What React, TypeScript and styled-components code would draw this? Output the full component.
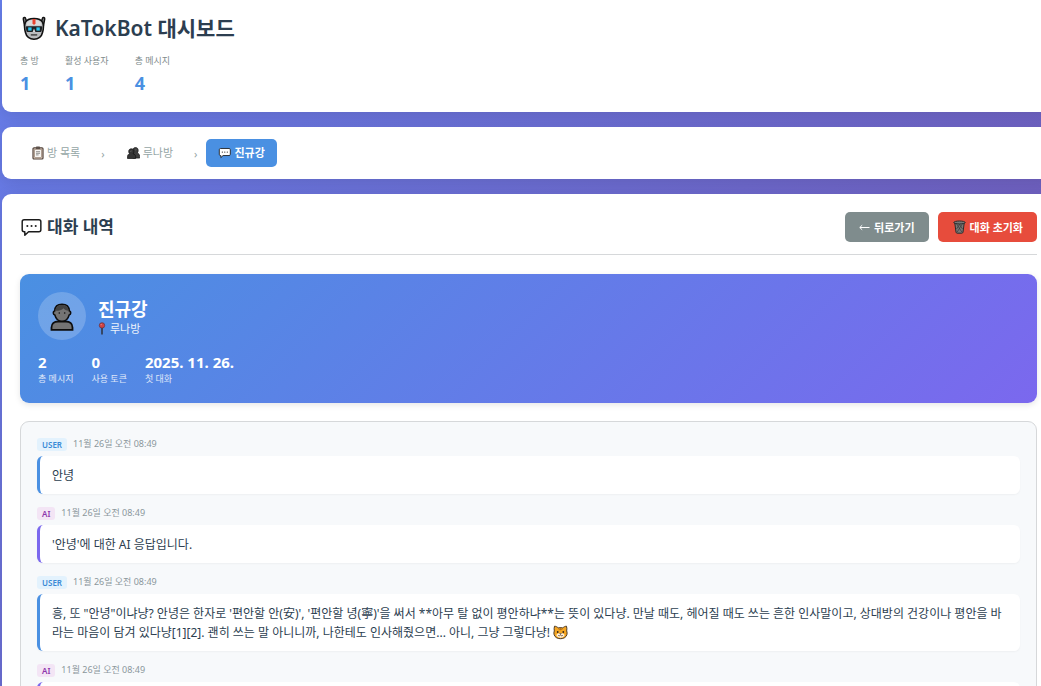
import React from "react";
import styled, { createGlobalStyle } from "styled-components";

const GlobalStyle = createGlobalStyle`
  * { box-sizing: border-box; }
  body {
    margin: 0;
    font-family: "Noto Sans", "Noto Sans CJK KR", sans-serif;
    color: #2c3e50;
  }
  h1, h2, h3, p, dl, dd, ol { margin: 0; padding: 0; }
  button { font-family: inherit; }
`;

const Page = styled.div`
  height: 100vh;
  overflow: hidden;
  background: linear-gradient(135deg, #667eea 0%, #764ba2 125%);
`;

const Container = styled.div`
  display: flex;
  flex-direction: column;
  gap: 15px;
  margin: 0 -14px 0 2px;
`;

const Card = styled.section`
  background: #fff;
  border-radius: 9px;
  padding: 18px;
  box-shadow: 0 4px 16px rgba(0, 0, 0, 0.1);
`;

const HeaderCard = styled(Card).attrs({ as: "header" })`
  border-radius: 0 0 9px 9px;
  padding-top: 14px;
`;

const Title = styled.h1`
  display: flex;
  align-items: center;
  gap: 7px;
  font-size: 21px;
  line-height: 28px;
  font-weight: 600;
`;

const StatList = styled.dl`
  display: flex;
  gap: 26px;
  margin-top: 12px;
`;

const StatLabel = styled.dt`
  font-size: 9px;
  line-height: 14px;
  color: #7f8c8d;
`;

const StatValue = styled.dd`
  padding-top: 4px;
  font-size: 18px;
  line-height: 22px;
  font-weight: 700;
  color: #4a90e2;
`;

const CrumbBar = styled(Card).attrs({ as: "nav" })`
  display: flex;
  align-items: center;
  gap: 9px;
  padding: 12px 18px;
  font-size: 11px;
  color: #95a5a6;
`;

const Crumb = styled.a<{ $active?: boolean }>`
  display: flex;
  align-items: center;
  gap: 3px;
  height: 28px;
  padding: 0 12px;
  border-radius: 5px;
  text-decoration: none;
  font-size: 11px;
  line-height: 16px;
  font-weight: ${(p) => (p.$active ? 700 : 400)};
  color: ${(p) => (p.$active ? "#fff" : "#95a5a6")};
  background: ${(p) => (p.$active ? "#4a90e2" : "transparent")};
`;

const SectionHead = styled.div`
  display: flex;
  align-items: center;
  justify-content: space-between;
  padding-bottom: 12px;
  margin-bottom: 19px;
  border-bottom: 1px solid #d6d8da;
`;

const SectionTitle = styled.h2`
  display: flex;
  align-items: center;
  gap: 5px;
  font-size: 17px;
  line-height: 24px;
  font-weight: 700;
`;

const Actions = styled.div`
  display: flex;
  gap: 9px;
`;

const Button = styled.button<{ $danger?: boolean }>`
  display: flex;
  align-items: center;
  gap: 4px;
  height: 30px;
  padding: 0 14px;
  border: 0;
  border-radius: 5px;
  font-size: 11px;
  font-weight: 700;
  color: #fff;
  background: ${(p) => (p.$danger ? "#e74c3c" : "#7f8c8d")};
`;

const Profile = styled.div`
  padding: 18px;
  border-radius: 9px;
  color: #fff;
  background: linear-gradient(135deg, #4a90e2 0%, #7b68ee 100%);
  box-shadow: 0 2px 6px rgba(0, 0, 0, 0.1);
`;

const ProfileTop = styled.div`
  display: flex;
  align-items: center;
  gap: 12px;
`;

const Avatar = styled.div`
  display: flex;
  align-items: center;
  justify-content: center;
  width: 48px;
  height: 48px;
  border-radius: 50%;
  background: rgba(255, 255, 255, 0.2);
`;

const Name = styled.h3`
  font-size: 18px;
  line-height: 24px;
  font-weight: 700;
`;

const Room = styled.p`
  display: flex;
  align-items: center;
  gap: 4px;
  font-size: 11px;
  line-height: 15px;
  opacity: 0.9;
`;

const ProfileStats = styled.dl`
  display: flex;
  gap: 18px;
  margin-top: 12px;
`;

const ProfileStat = styled.div`
  display: flex;
  flex-direction: column-reverse;
`;

const ProfileLabel = styled.dt`
  font-size: 9px;
  line-height: 13px;
  opacity: 0.8;
`;

const ProfileValue = styled.dd`
  font-size: 15px;
  line-height: 20px;
  font-weight: 700;
`;

const ChatBox = styled.ol`
  display: flex;
  flex-direction: column;
  gap: 12px;
  margin-top: 18px;
  padding: 15px 16px;
  list-style: none;
  border: 1px solid #d6d8da;
  border-radius: 9px;
  background: #f7f9fb;
`;

const MessageHead = styled.div`
  display: flex;
  align-items: center;
  gap: 6px;
  height: 14px;
  margin-bottom: 5px;
`;

type Role = "user" | "ai";

const RoleBadge = styled.span<{ $role: Role }>`
  padding: 0 5px;
  border-radius: 3px;
  font-size: 8px;
  line-height: 13px;
  font-weight: 600;
  color: ${(p) => (p.$role === "user" ? "#3a8ad6" : "#8e36ac")};
  background: ${(p) => (p.$role === "user" ? "#e3f2fd" : "#f3e5f5")};
`;

const Time = styled.time`
  font-size: 9px;
  line-height: 14px;
  color: #8b979c;
`;

const Bubble = styled.p<{ $role: Role }>`
  min-height: 38px;
  padding: 10px 12px 9px;
  border-left: 3px solid ${(p) => (p.$role === "user" ? "#4a90e2" : "#7b68ee")};
  border-radius: 6px;
  font-size: 12px;
  line-height: 19px;
  background: #fff;
  box-shadow: 0 1px 2px rgba(0, 0, 0, 0.04);
`;

const InlineIcon = styled.span`
  display: inline-block;
  vertical-align: -3px;
  line-height: 0;
`;

const RobotIcon = () => (
  <svg width="28" height="28" viewBox="0 0 28 28" aria-hidden="true">
    <path d="M4.900 13.500L3.300 4.800c-.2-1.500 1.800-1.900 2.200-.5l1.500 4.500M23.100 13.500l1.600-8.700c.2-1.500-1.800-1.900-2.200-.5L21 8.800" fill="#8f9193" stroke="#111" strokeWidth="1.500" strokeLinejoin="round" />
    <path d="M14 4.500c4.300 0 7.300 1.200 8.700 4 .9 2.500.9 6.300-.2 10-.8 3.900-4.200 6.800-8.500 6.800s-7.700-2.900-8.500-6.800c-1.100-3.700-1.100-7.500-.2-10 1.400-2.800 4.400-4 8.700-4z" fill="#b9bbbd" stroke="#111" strokeWidth="1.600" />
    <path d="M14 5.800c3.600 0 6 1 7.200 3.200l.4 2.600H6.400L6.800 9C8 6.800 10.400 5.800 14 5.800z" fill="#d9dadb" />
    <path d="M12.500 5h3v4.600L14 11l-1.500-1.400z" fill="#e8432f" />
    <path d="M7 12.200h14c.9 0 1.300.5 1.200 1.300l-.5 3.300c-.1.800-.6 1.200-1.400 1.200H7.700c-.8 0-1.300-.4-1.400-1.200l-.5-3.300c-.1-.8.3-1.300 1.200-1.300z" fill="#1d2124" />
    <rect x="8.200" y="13.400" width="3.400" height="3.200" fill="#28c4ee" />
    <rect x="16.400" y="13.400" width="3.400" height="3.200" fill="#28c4ee" />
    <path d="M14 14.600l1.400 3.500h-2.800z" fill="#d8d8d8" />
    <path d="M10.800 20.900h6.400" stroke="#333" strokeWidth="1.300" />
  </svg>
);

const ClipboardIcon = () => (
  <svg width="12" height="14" viewBox="0 0 12 14" aria-hidden="true">
    <rect x="1" y="1.800" width="10" height="11.200" rx="1" fill="#ead9c8" stroke="#51423a" strokeWidth="1.200" />
    <rect x="2.700" y="3.500" width="6.600" height="7.800" fill="#f7f5f2" stroke="#88766a" strokeWidth=".6" />
    <rect x="4" y=".6" width="4" height="2.400" rx=".6" fill="#5d514a" />
    <path d="M4 5.700h4M4 7.300h4M4 8.900h2.600" stroke="#666" strokeWidth=".7" />
  </svg>
);

const PeopleIcon = () => (
  <svg width="14" height="12" viewBox="-1 0 14 12" aria-hidden="true">
    <path d="M5.800 6V3.400C5.800 1.500 7 .5 8.500.5s2.700 1 2.700 2.900c0 1.100-.4 2-.9 2.600 1.500.5 2.300 1.600 2.300 3.200v1.900H5.800z" fill="#3c3c3c" stroke="#151515" strokeWidth=".7" />
    <path d="M.5 11.500V9.700c0-1.500.7-2.500 2.100-3-.6-.6-.9-1.300-.9-2.200 0-1.700 1-2.700 2.600-2.700s2.600 1 2.600 2.700c0 .9-.3 1.600-.9 2.200 1.700.5 2.600 1.500 2.600 3v1.800z" fill="#343434" stroke="#111" strokeWidth=".7" />
    <path d="M3 4.500c1 0 1.500-.4 1.900-.9M8 3c.8 0 1.200-.3 1.600-.7" stroke="#6b6b6b" strokeWidth=".6" fill="none" />
  </svg>
);

const SpeechIcon = ({ width, height }: { width: number; height: number }) => (
  <svg width={width} height={height} viewBox="-1 0 21 17" aria-hidden="true">
    <path d="M3 1.200h14c1.100 0 1.900.8 1.900 1.900v7.600c0 1.100-.8 1.900-1.900 1.900H7.200L3.600 15.900v-3.300H3c-1.100 0-1.900-.8-1.900-1.900V3.100c0-1.100.8-1.900 1.900-1.900z" fill="#fff" stroke="#1b1b1b" strokeWidth="1.400" strokeLinejoin="round" />
    <circle cx="6" cy="7" r="1" fill="#222" />
    <circle cx="10" cy="7" r="1" fill="#222" />
    <circle cx="14" cy="7" r="1" fill="#222" />
  </svg>
);

const ArrowIcon = () => (
  <svg width="11" height="7" viewBox="0 0 11 7" fill="none" stroke="#fff" strokeWidth="1" aria-hidden="true">
    <path d="M.8 3.500H10.500M3.200 1.200L.8 3.500l2.400 2.300" />
  </svg>
);

const TrashIcon = () => (
  <svg width="14" height="14" viewBox="-1 0 14 14" aria-hidden="true">
    <path d="M1.800 3.200h9.400L10 12.200c-.1.600-.6 1-1.200 1H4.200c-.6 0-1.100-.4-1.200-1z" fill="#7a7776" stroke="#2b2b2b" strokeWidth="1" />
    <path d="M4 4.500l4.800 7.500M6.500 4.500l3 4.500M9 4.500L4.200 12M6.500 4.500l-3 4.500" stroke="#393939" strokeWidth=".7" />
    <ellipse cx="6.500" cy="2.500" rx="5.700" ry="1.500" fill="#777" stroke="#2b2b2b" strokeWidth="1" />
  </svg>
);

const PersonIcon = () => (
  <svg width="24" height="30" viewBox="0 -2 24 30" aria-hidden="true">
    <path d="M1.500 26.900v-2.400c0-3.900 2.900-6 6.500-6h8c3.600 0 6.500 2.100 6.500 6v2.400z" fill="#747474" stroke="#0d0d0d" strokeWidth="1.800" />
    <path d="M4.700 7.800C4.900 3.600 7.800 1.200 12 1.200s7.100 2.400 7.300 6.600c1.900.6 1.900 3.700-.2 4.300-.9 3.400-3.500 6.200-7.100 6.200s-6.200-2.800-7.100-6.200c-2.100-.6-2.100-3.700-.2-4.300z" fill="#747474" stroke="#0d0d0d" strokeWidth="1.600" />
    <path d="M5.200 7.800C5.800 3.900 8.300 2 12 2s6.200 1.900 6.800 5.800c-2.600-.2-4.300-1-5.300-2.600C11.800 7 8.700 7.900 5.200 7.800z" fill="#434343" />
    <circle cx="9.300" cy="10" r=".8" fill="#111" />
    <circle cx="14.700" cy="10" r=".8" fill="#111" />
  </svg>
);

const PinIcon = () => (
  <svg width="8" height="13" viewBox="0 0 8 13" aria-hidden="true">
    <path d="M4 5v7.500" stroke="#2d2d35" strokeWidth="1.600" />
    <circle cx="4" cy="3.400" r="2.700" fill="#df3b32" stroke="#63272d" strokeWidth=".7" />
    <circle cx="3.200" cy="2.600" r=".7" fill="#f58a80" />
  </svg>
);

const CatIcon = () => (
  <svg width="15" height="15" viewBox="0 0 15 15" aria-hidden="true">
    <path d="M1.500 1.200c1.300 0 2.700.7 3.700 1.700 1.500-.5 3.100-.5 4.600 0 1-1 2.400-1.700 3.700-1.700.5 1.600.5 3.300.2 4.700.5 1.300.6 2.600.2 3.800-.8 2.600-3.300 4-6.400 4s-5.600-1.400-6.400-4c-.4-1.200-.3-2.500.2-3.800-.3-1.400-.3-3.100.2-4.700z" fill="#f5a623" stroke="#3b2a1c" strokeWidth=".9" />
    <path d="M7.500 8c1.500 0 3.600.9 4.100 2-.5 1.900-2.100 2.700-4.100 2.700s-3.600-.8-4.100-2.700C3.900 8.900 6 8 7.500 8z" fill="#fff3e0" />
    <circle cx="4.700" cy="7" r=".9" fill="#33251a" />
    <circle cx="10.300" cy="7" r=".9" fill="#33251a" />
    <path d="M6.700 8.600h1.600l-.8.900zM5 10c.8 1.300 1.800 1 2.500 0 .7 1 1.700 1.300 2.500 0" fill="none" stroke="#4b3420" strokeWidth=".7" />
    <path d="M6 3.200l.4 1.800M7.500 3v2.200M9 3.200L8.600 5" stroke="#9a5b14" strokeWidth=".7" />
  </svg>
);

const totals = [
  { label: "총 방", value: "1" },
  { label: "활성 사용자", value: "1" },
  { label: "총 메시지", value: "4" },
];

const profileStats = [
  { label: "총 메시지", value: "2" },
  { label: "사용 토큰", value: "0" },
  { label: "첫 대화", value: "2025. 11. 26." },
];

const messages: { role: Role; body: React.ReactNode }[] = [
  { role: "user", body: "안녕" },
  { role: "ai", body: "'안녕'에 대한 AI 응답입니다." },
  {
    role: "user",
    body: (
      <>
        흥, 또 "안녕"이냐냥? 안녕은 한자로 '편안할 안(安)', '편안할 녕(寧)'을 써서 **아무 탈 없이
        평안하냐**는 뜻이 있다냥. 만날 때도, 헤어질 때도 쓰는 흔한 인사말이고, 상대방의 건강이나
        평안을 바라는 마음이 담겨 있다냥[1][2]. 괜히 쓰는 말 아니니까, 나한테도 인사해줬으면... 아니,
        그냥 그렇다냥!{" "}
        <InlineIcon>
          <CatIcon />
        </InlineIcon>
      </>
    ),
  },
  { role: "ai", body: "" },
];

export default function App() {
  return (
    <Page>
      <GlobalStyle />
      <Container>
        <HeaderCard>
          <Title>
            <RobotIcon />
            KaTokBot 대시보드
          </Title>
          <StatList>
            {totals.map((s) => (
              <div key={s.label}>
                <StatLabel>{s.label}</StatLabel>
                <StatValue>{s.value}</StatValue>
              </div>
            ))}
          </StatList>
        </HeaderCard>

        <CrumbBar>
          <Crumb href="#rooms">
            <ClipboardIcon />방 목록
          </Crumb>
          <span>›</span>
          <Crumb href="#room">
            <PeopleIcon />
            루나방
          </Crumb>
          <span>›</span>
          <Crumb href="#user" $active>
            <SpeechIcon width={13} height={12} />
            진규강
          </Crumb>
        </CrumbBar>

        <Card>
          <SectionHead>
            <SectionTitle>
              <SpeechIcon width={22} height={19} />
              대화 내역
            </SectionTitle>
            <Actions>
              <Button type="button">
                <ArrowIcon />
                뒤로가기
              </Button>
              <Button type="button" $danger>
                <TrashIcon />
                대화 초기화
              </Button>
            </Actions>
          </SectionHead>

          <Profile>
            <ProfileTop>
              <Avatar>
                <PersonIcon />
              </Avatar>
              <div>
                <Name>진규강</Name>
                <Room>
                  <PinIcon />
                  루나방
                </Room>
              </div>
            </ProfileTop>
            <ProfileStats>
              {profileStats.map((s) => (
                <ProfileStat key={s.label}>
                  <ProfileLabel>{s.label}</ProfileLabel>
                  <ProfileValue>{s.value}</ProfileValue>
                </ProfileStat>
              ))}
            </ProfileStats>
          </Profile>

          <ChatBox>
            {messages.map((m, i) => (
              <li key={i}>
                <MessageHead>
                  <RoleBadge $role={m.role}>{m.role.toUpperCase()}</RoleBadge>
                  <Time>11월 26일 오전 08:49</Time>
                </MessageHead>
                <Bubble $role={m.role}>{m.body}</Bubble>
              </li>
            ))}
          </ChatBox>
        </Card>
      </Container>
    </Page>
  );
}
